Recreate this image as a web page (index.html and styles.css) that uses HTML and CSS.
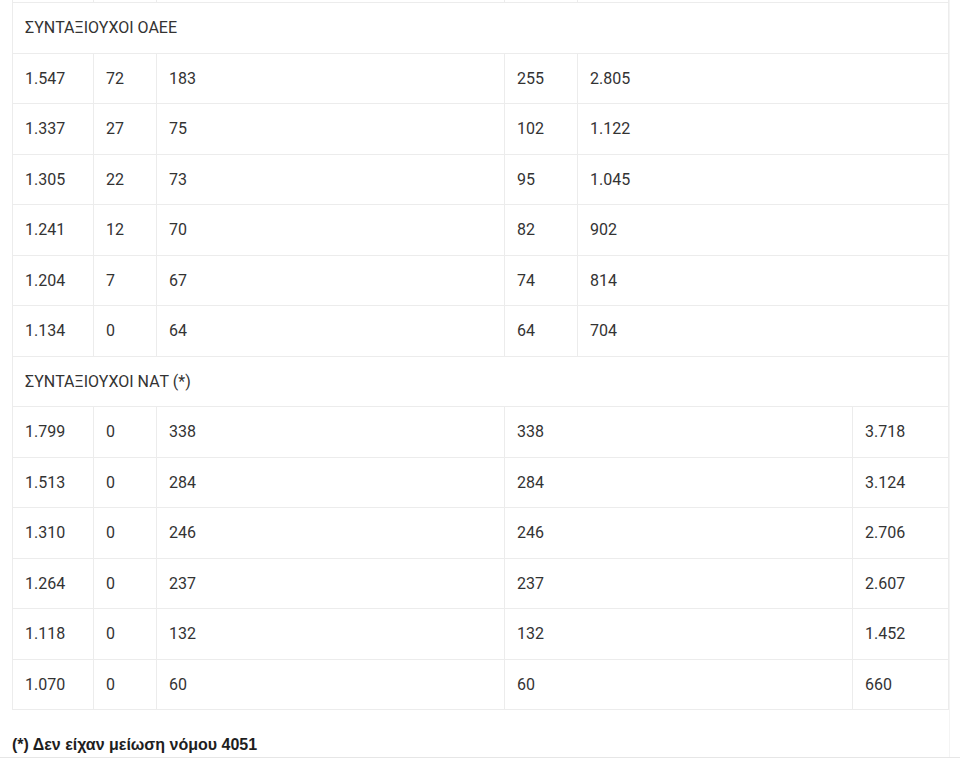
FILE: index.html
```html
<!DOCTYPE html>
<html lang="el">
<head>
<meta charset="utf-8">
<title>Συντάξεις</title>
<link rel="stylesheet" href="styles.css">
</head>
<body>
<div class="page">
  <div class="scroller">
    <table class="grid">
      <colgroup>
        <col class="c1"><col class="c2"><col class="c3"><col class="c4"><col class="c5"><col class="c6">
      </colgroup>
      <tbody>
        <tr class="ghost"><td>&nbsp;</td><td>&nbsp;</td><td>&nbsp;</td><td>&nbsp;</td><td colspan="2">&nbsp;</td></tr>
        <tr><td colspan="6">ΣΥΝΤΑΞΙΟΥΧΟΙ ΟΑΕΕ</td></tr>
        <tr><td>1.547</td><td>72</td><td>183</td><td>255</td><td colspan="2">2.805</td></tr>
        <tr><td>1.337</td><td>27</td><td>75</td><td>102</td><td colspan="2">1.122</td></tr>
        <tr><td>1.305</td><td>22</td><td>73</td><td>95</td><td colspan="2">1.045</td></tr>
        <tr><td>1.241</td><td>12</td><td>70</td><td>82</td><td colspan="2">902</td></tr>
        <tr><td>1.204</td><td>7</td><td>67</td><td>74</td><td colspan="2">814</td></tr>
        <tr><td>1.134</td><td>0</td><td>64</td><td>64</td><td colspan="2">704</td></tr>
        <tr><td colspan="6">ΣΥΝΤΑΞΙΟΥΧΟΙ ΝΑΤ (*)</td></tr>
        <tr><td>1.799</td><td>0</td><td>338</td><td colspan="2">338</td><td>3.718</td></tr>
        <tr><td>1.513</td><td>0</td><td>284</td><td colspan="2">284</td><td>3.124</td></tr>
        <tr><td>1.310</td><td>0</td><td>246</td><td colspan="2">246</td><td>2.706</td></tr>
        <tr><td>1.264</td><td>0</td><td>237</td><td colspan="2">237</td><td>2.607</td></tr>
        <tr><td>1.118</td><td>0</td><td>132</td><td colspan="2">132</td><td>1.452</td></tr>
        <tr><td>1.070</td><td>0</td><td>60</td><td colspan="2">60</td><td>660</td></tr>
      </tbody>
    </table>
    <p class="note">(*) Δεν είχαν μείωση νόμου 4051</p>
  </div>
  <div class="rule"></div>
</div>
</body>
</html>
```
FILE: styles.css
```css
html, body {
  margin: 0;
  padding: 0;
  background: #ffffff;
}
.page {
  width: 960px;
  height: 764px;
  overflow: hidden;
}
.scroller {
  width: 950px;
  box-sizing: border-box;
  padding-left: 12px;
  border-right: 1px solid #f4f4f4;
  margin-top: -47.5px;
}
.grid {
  border-collapse: collapse;
  table-layout: fixed;
  width: 936px;
  font-family: Roboto, "Noto Sans", sans-serif;
  font-size: 16px;
  color: #333333;
}
.c1 { width: 81px; }
.c2 { width: 63px; }
.c3 { width: 348px; }
.c4 { width: 73px; }
.c5 { width: 275px; }
.c6 { width: 96px; }
.grid td {
  border: 1px solid #ececec;
  padding: 15px 12px;
  line-height: 19.5px;
  text-align: left;
  vertical-align: middle;
  white-space: nowrap;
}
.grid tr.ghost td {
  border-top: none;
}
.note {
  margin: 0;
  padding: 26px 0 4px;
  font-family: "Liberation Sans", Arial, sans-serif;
  font-weight: bold;
  font-size: 16px;
  line-height: 17px;
  color: #1e1e1e;
}
.rule {
  height: 1px;
  background: #e6e6e6;
  width: 960px;
}
```
